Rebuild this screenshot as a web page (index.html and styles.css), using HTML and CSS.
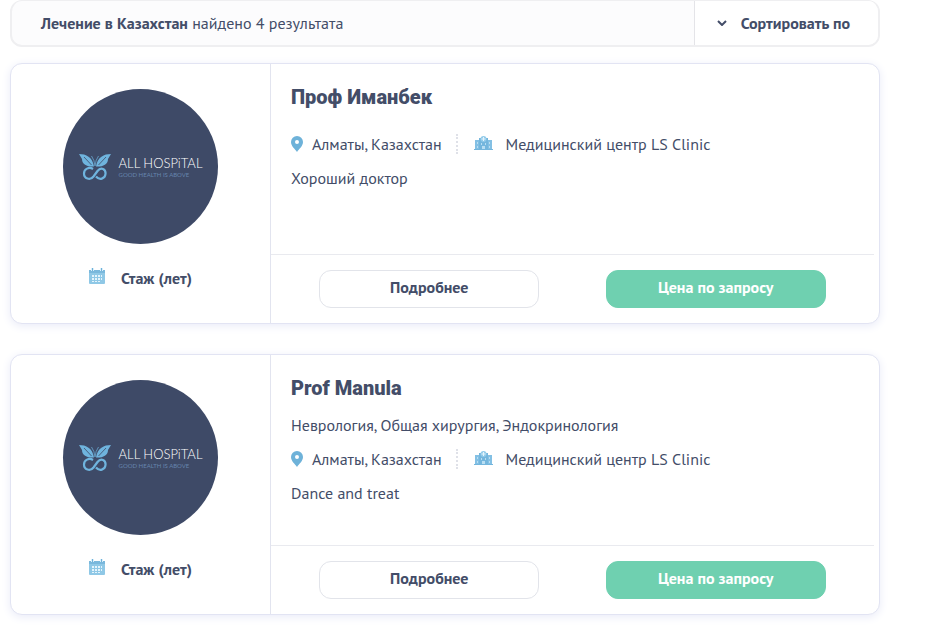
FILE: index.html
```html
<!DOCTYPE html>
<html lang="ru">
<head>
<meta charset="utf-8">
<meta name="viewport" content="width=device-width, initial-scale=1">
<title>Лечение в Казахстан</title>
<link rel="stylesheet" href="styles.css">
</head>
<body>
<svg class="sprite" aria-hidden="true">
  <symbol id="butterfly" viewBox="0 0 32 28">
    <path fill="#6fb4de" d="M0 1C7 1 13.500 4 15 13.500C9 14 3 12 3 6Z"/>
    <path fill="#6fb4de" d="M32 1C25 1 18.500 4 17 13.500C23 14 29 12 29 6Z"/>
    <path fill="none" stroke="#3e4a67" stroke-width=".8" d="M5 4L12.500 12M27 4L19.500 12"/>
    <path fill="none" stroke="#6fb4de" stroke-width=".7" d="M16 13Q15.500 7 12.500 3M16 13Q16.500 7 19.500 3"/>
    <path fill="none" stroke="#6fb4de" stroke-width="2.200" d="M14 16C10 13.500 5 16 5 20.500C5 25.500 11 28 14.500 23.500L18.500 18C22 13.500 27 16 26.500 21C26 26 20.500 27.500 17 23.500"/>
  </symbol>
  <symbol id="calendar" viewBox="0 0 16 16">
    <path fill="#8fc8e6" d="M0 2h16v13a1 1 0 0 1-1 1H1a1 1 0 0 1-1-1z"/>
    <path fill="#7ab8dc" d="M0 2h16v3H0z"/>
    <path fill="#d9effa" d="M2 0h3v3H2zM11 0h3v3h-3z"/>
    <path fill="#6fb0d8" d="M3 0h1v3H3zM12 0h1v3h-1z"/>
    <path fill="#e4f4fc" d="M3 7h2v2H3zM6 7h2v2H6zM9 7h2v2H9zM12 7h1v2h-1zM3 10h2v2H3zM6 10h2v2H6zM9 10h2v2H9zM12 10h1v2h-1zM3 13h2v1H3zM6 13h2v1H6zM9 13h2v1H9z"/>
  </symbol>
  <symbol id="pin" viewBox="0 0 12 16">
    <path fill="#6eb2d9" fill-rule="evenodd" d="M6 0a6 6 0 0 1 6 6c0 4-4 7-6 10C4 13 0 10 0 6a6 6 0 0 1 6-6zm0 4a2 2 0 1 0 0 4 2 2 0 0 0 0-4z"/>
  </symbol>
  <symbol id="hospital" viewBox="0 0 19 14">
    <path fill="#83c0e4" d="M1 4h5v10H1zM13 4h5v10h-5z"/>
    <path fill="#74b6dd" d="M5 2h9v12H5zM0 13h19v1H0z"/>
    <circle cx="9.500" cy="3" r="3" fill="#92cbea"/>
    <path fill="#e4f4fc" d="M9 1h1v1.500h1.500v1H10V5H9V3.500H7.500v-1H9z"/>
    <path fill="#b9def2" d="M3 6h1v2H3zM3 10h1v2H3zM15 6h1v2h-1zM15 10h1v2h-1zM7 7h1v2H7zM11 7h1v2h-1zM8 10h3v3H8z"/>
  </symbol>
</svg>

<main class="results">
  <header class="summary">
    <p class="summary-text"><strong>Лечение в Казахстан</strong> найдено 4 результата</p>
    <button class="sort" type="button">
      <svg class="chevron" viewBox="0 0 10 6" aria-hidden="true"><path d="M1 1l4 4 4-4"/></svg>
      Сортировать по
    </button>
  </header>

  <article class="card">
    <div class="profile">
      <div class="avatar">
        <svg class="butterfly" aria-hidden="true"><use href="#butterfly"/></svg>
        <div class="brand"><span class="brand-name">ALL HOSPiTAL</span><span class="brand-tag">GOOD HEALTH IS ABOVE</span></div>
      </div>
      <p class="experience"><svg class="calendar" aria-hidden="true"><use href="#calendar"/></svg>Стаж (лет)</p>
    </div>
    <div class="details">
      <div class="info">
        <h2>Проф Иманбек</h2>
        <p class="specialties"></p>
        <div class="place">
          <svg class="pin" aria-hidden="true"><use href="#pin"/></svg>
          <span class="city">Алматы, Казахстан</span>
          <svg class="hospital" aria-hidden="true"><use href="#hospital"/></svg>
          <span>Медицинский центр LS Clinic</span>
        </div>
        <p class="about">Хороший доктор</p>
      </div>
      <div class="actions">
        <button class="button" type="button">Подробнее</button>
        <button class="button button-primary" type="button">Цена по запросу</button>
      </div>
    </div>
  </article>

  <article class="card">
    <div class="profile">
      <div class="avatar">
        <svg class="butterfly" aria-hidden="true"><use href="#butterfly"/></svg>
        <div class="brand"><span class="brand-name">ALL HOSPiTAL</span><span class="brand-tag">GOOD HEALTH IS ABOVE</span></div>
      </div>
      <p class="experience"><svg class="calendar" aria-hidden="true"><use href="#calendar"/></svg>Стаж (лет)</p>
    </div>
    <div class="details">
      <div class="info">
        <h2>Prof Manula</h2>
        <p class="specialties">Неврология, Общая хирургия, Эндокринология</p>
        <div class="place">
          <svg class="pin" aria-hidden="true"><use href="#pin"/></svg>
          <span class="city">Алматы, Казахстан</span>
          <svg class="hospital" aria-hidden="true"><use href="#hospital"/></svg>
          <span>Медицинский центр LS Clinic</span>
        </div>
        <p class="about">Dance and treat</p>
      </div>
      <div class="actions">
        <button class="button" type="button">Подробнее</button>
        <button class="button button-primary" type="button">Цена по запросу</button>
      </div>
    </div>
  </article>
</main>
</body>
</html>
```

FILE: styles.css
```css
* {
  box-sizing: border-box;
}

body {
  margin: 0;
  background: #fff;
  color: #434d68;
  font: 16px/24px "PT Sans", "Noto Sans", sans-serif;
}

h2,
p {
  margin: 0;
}

button {
  color: inherit;
  font: inherit;
  font-weight: 700;
  cursor: pointer;
}

.sprite {
  display: none;
}

.results {
  padding: 0 47px 20px 10px;
}

.summary {
  display: flex;
  justify-content: space-between;
  overflow: hidden;
  margin-bottom: 16px;
  border: 2px solid #efeff1;
  border-top-width: 1px;
  border-radius: 12px;
  background: #fcfcfd;
}

.summary-text {
  padding: 10px 29px;
}

.sort {
  display: flex;
  align-items: center;
  gap: 14px;
  padding: 0 28px 0 22px;
  border: 0;
  border-left: 1px solid #e4e4e8;
  background: #fff;
}

.chevron {
  width: 10px;
  height: 6px;
  fill: none;
  stroke: #434d68;
  stroke-width: 2;
}

.card {
  display: grid;
  grid-template-columns: 260px 1fr;
  min-height: 261px;
  border: 1px solid #e2e4f3;
  border-radius: 12px;
  background: #fff;
  box-shadow: 0 2px 10px #e9ebf8;
}

.card + .card {
  margin-top: 30px;
}

.profile {
  display: flex;
  flex-direction: column;
  align-items: center;
  gap: 22px;
  padding-top: 25px;
  border-right: 1px solid #e2e4ef;
}

.avatar {
  display: flex;
  align-items: center;
  justify-content: center;
  gap: 8px;
  width: 155px;
  height: 155px;
  border-radius: 50%;
  background: #3e4a67;
}

.butterfly {
  width: 32px;
  height: 28px;
}

.brand {
  display: flex;
  flex-direction: column;
  color: #fff;
  font-family: Lato, sans-serif;
  white-space: nowrap;
}

.brand-name {
  font-size: 13px;
  font-weight: 300;
  line-height: 16px;
}

.brand-tag {
  color: #6685ae;
  font-size: 6px;
  line-height: 8px;
}

.experience {
  display: flex;
  align-items: center;
  gap: 16px;
  font-weight: 700;
}

.calendar {
  width: 16px;
  height: 16px;
  margin-bottom: 4px;
}

.details {
  display: flex;
  flex-direction: column;
}

.info {
  flex: 1;
  padding: 21px 20px;
}

h2 {
  margin-bottom: 13px;
  font: 900 20px/24px Roboto, sans-serif;
}

.specialties:not(:empty) {
  margin-bottom: 10px;
}

.specialties:empty {
  margin-top: 23px;
}

.place {
  display: flex;
  align-items: center;
  margin-bottom: 10px;
}

.pin {
  width: 12px;
  height: 16px;
  margin-right: 9px;
}

.city {
  margin-right: 16px;
  padding-right: 14px;
  border-right: 2px dotted #dfe1e8;
  line-height: 20px;
}

.hospital {
  width: 19px;
  height: 14px;
  margin: 0 13px 3px 0;
}

.actions {
  display: grid;
  grid-template-columns: 1fr 1fr;
  justify-items: center;
  margin-right: 5px;
  padding: 15px;
  border-top: 1px solid #e9eaef;
}

.button {
  width: 220px;
  height: 38px;
  padding: 0 0 4px;
  border: 1px solid #e2e4ea;
  border-radius: 12px;
  background: #fff;
}

.button-primary {
  border-color: #6fd0b0;
  background: #6fd0b0;
  color: #fff;
}
```
